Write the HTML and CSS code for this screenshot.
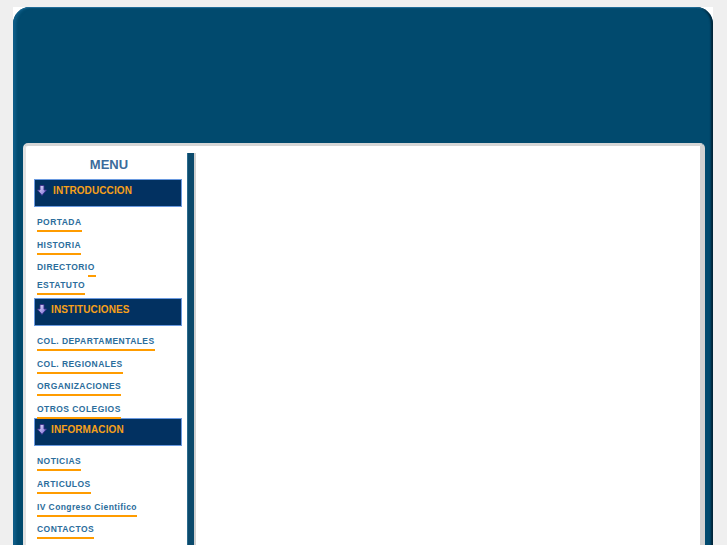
FILE: index.html
```html
<!DOCTYPE html>
<html lang="es">
<head>
<meta charset="utf-8">
<title>Menu</title>
<link rel="stylesheet" href="styles.css">
</head>
<body>
<div class="frame">
  <div class="shell">
    <div class="header"></div>
    <div class="panel">
      <aside class="menu">
        <h2 class="menu-title">MENU</h2>

        <div class="section-head">
          <svg class="arrow" width="10" height="11" viewBox="0 0 10 11"><defs><linearGradient id="g1" x1="0" y1="0" x2="1" y2="1"><stop offset="0" stop-color="#eeeaff"/><stop offset="1" stop-color="#6f62d0"/></linearGradient></defs><path d="M3 0.5H7V5H9.5L5 10.5L0.5 5H3Z" fill="url(#g1)" stroke="#352d88" stroke-width="0.9"/></svg>
          <span class="head-text first">INTRODUCCION</span>
        </div>
        <ul class="links links-a">
          <li><a class="link">PORTADA</a></li>
          <li><a class="link">HISTORIA</a></li>
          <li><a class="link link-short">DIRECTORI<span class="tail">O</span></a></li>
          <li><a class="link">ESTATUTO</a></li>
        </ul>

        <div class="section-head">
          <svg class="arrow" width="10" height="11" viewBox="0 0 10 11"><defs><linearGradient id="g2" x1="0" y1="0" x2="1" y2="1"><stop offset="0" stop-color="#eeeaff"/><stop offset="1" stop-color="#6f62d0"/></linearGradient></defs><path d="M3 0.5H7V5H9.5L5 10.5L0.5 5H3Z" fill="url(#g2)" stroke="#352d88" stroke-width="0.9"/></svg>
          <span class="head-text">INSTITUCIONES</span>
        </div>
        <ul class="links links-b">
          <li><a class="link">COL. DEPARTAMENTALES</a></li>
          <li><a class="link">COL. REGIONALES</a></li>
          <li><a class="link">ORGANIZACIONES</a></li>
          <li><a class="link">OTROS COLEGIOS</a></li>
        </ul>

        <div class="section-head">
          <svg class="arrow" width="10" height="11" viewBox="0 0 10 11"><defs><linearGradient id="g3" x1="0" y1="0" x2="1" y2="1"><stop offset="0" stop-color="#eeeaff"/><stop offset="1" stop-color="#6f62d0"/></linearGradient></defs><path d="M3 0.5H7V5H9.5L5 10.5L0.5 5H3Z" fill="url(#g3)" stroke="#352d88" stroke-width="0.9"/></svg>
          <span class="head-text">INFORMACION</span>
        </div>
        <ul class="links">
          <li><a class="link">NOTICIAS</a></li>
          <li><a class="link">ARTICULOS</a></li>
          <li><a class="link mixed">IV Congreso Cientifico</a></li>
          <li><a class="link">CONTACTOS</a></li>
        </ul>
      </aside>
      <div class="divider"></div>
      <main class="content"></main>
    </div>
  </div>
</div>
</body>
</html>
```

FILE: styles.css
```css
html, body {
  margin: 0;
  padding: 0;
  background: #efefef;
  overflow: hidden;
  height: 545px;
}

.frame {
  margin: 7px 0 0 13px;
  width: 700px;
  height: 560px;
  background: #ffffff;
}

.shell {
  height: 100%;
  background: #014a6e;
  border-radius: 17px 17px 0 0;
  box-shadow:
    inset 4px 0 3px -1px #0f5e88,
    inset -3px 0 2px -1px #002437,
    inset 0 2px 1px -1px #2a78a2;
  display: flex;
  flex-direction: column;
}

.header {
  height: 136px;
  flex: none;
}

.panel {
  flex: 1;
  margin: 0 8px 0 10px;
  background: #ffffff;
  border-left: 3px solid #e2e2e2;
  border-top: 3px solid #d6d6d6;
  border-right: 5px solid #d2d2d2;
  border-radius: 5px 5px 0 0;
  display: flex;
  align-items: stretch;
}

.menu {
  width: 161px;
  flex: none;
  box-sizing: border-box;
  padding: 11px 5px 0 8px;
  font-family: "Liberation Sans", Arial, sans-serif;
}

.menu-title {
  margin: 0 0 6px 0;
  text-align: center;
  font-size: 13px;
  line-height: 16px;
  font-weight: bold;
  color: #3b6b9b;
  position: relative;
  left: 1px;
}

.section-head {
  box-sizing: border-box;
  height: 28px;
  width: 148px;
  background: #023161;
  border: 1px solid #6a9ae0;
  padding: 4px 0 0 2px;
  display: flex;
  align-items: flex-start;
}

.arrow {
  flex: none;
  margin-top: 1px;
}

.head-text {
  margin-left: 4px;
  font-size: 10px;
  line-height: 13px;
  font-weight: bold;
  color: #f6a01a;
  letter-spacing: 0.1px;
}

.head-text.first {
  margin-left: 6px;
}

.links {
  list-style: none;
  margin: 10px 0 0 0;
  padding: 0 0 0 3px;
  display: flex;
  flex-direction: column;
  gap: 7.7px;
}

.links-a {
  margin-bottom: 3px;
}

.links-b {
  margin-bottom: -1px;
}

.links li {
  display: block;
  line-height: 0;
}

.link {
  display: inline-block;
  font-size: 8.5px;
  line-height: 10px;
  font-weight: bold;
  letter-spacing: 0.45px;
  color: #2b6d9c;
  padding-bottom: 3px;
  border-bottom: 2px solid #ff9c00;
}

.link.mixed {
  letter-spacing: 0.4px;
}

.link-short {
  border-bottom: none;
  padding-bottom: 0;
}

.tail {
  display: inline-block;
  line-height: 10px;
  height: 10px;
  position: relative;
}

.tail::after {
  content: "";
  position: absolute;
  left: 0;
  right: -1px;
  top: 13px;
  height: 2px;
  background: #ff9c00;
}

.divider {
  width: 7px;
  flex: none;
  margin-top: 7px;
  background: #0b4a6c;
  border-left: 1px solid #2a6a8c;
  box-sizing: border-box;
  box-shadow: 2px 0 0 #d0d0d0;
}

.content {
  flex: 1;
}
```
